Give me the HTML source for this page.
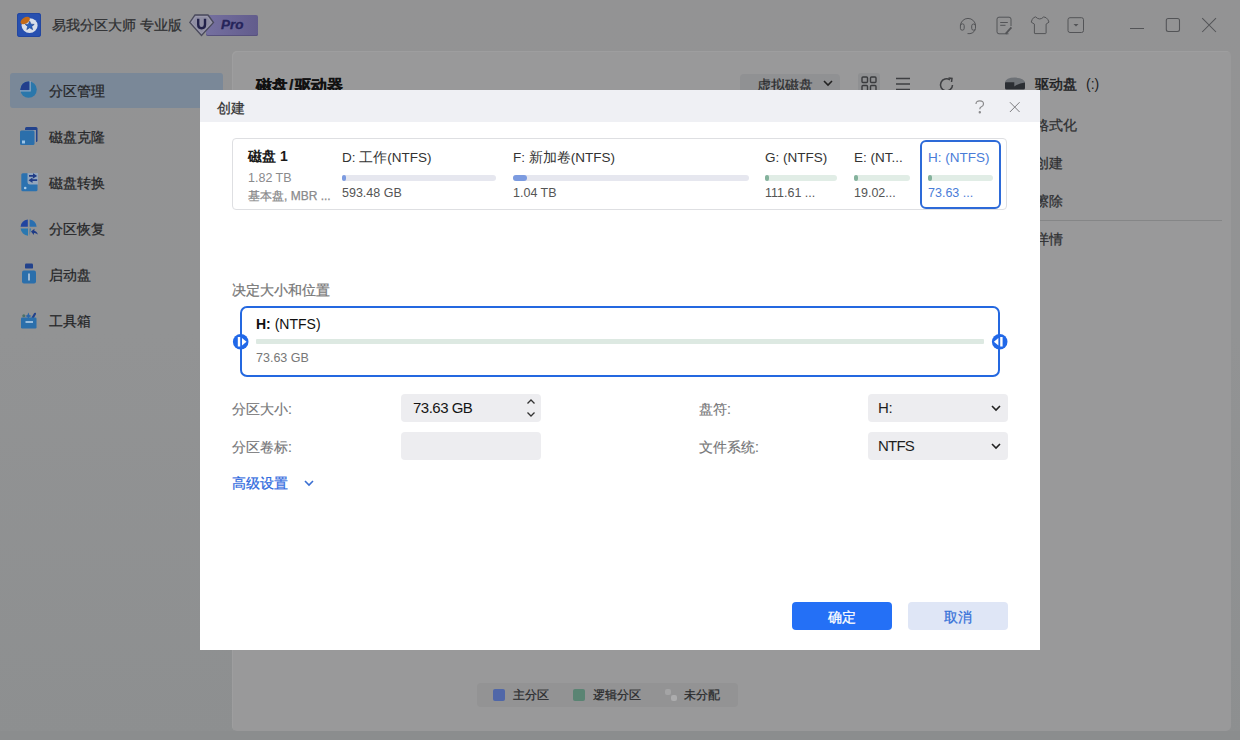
<!DOCTYPE html>
<html><head><meta charset="utf-8">
<style>
*{box-sizing:border-box;margin:0;padding:0}
html,body{width:1240px;height:740px;overflow:hidden}
body{position:relative;background:linear-gradient(180deg,#939394 0%,#929394 45%,#8d8f90 100%);font-family:"Liberation Sans",sans-serif;color:#2b2c2e}
.abs{position:absolute}
.t{position:absolute;white-space:nowrap;line-height:1}
svg{position:absolute;overflow:visible}
.t,.navt,.rm,.lbl{-webkit-text-stroke:0.25px currentColor}
.nl{-webkit-text-stroke:0 !important}
#panel{position:absolute;left:232px;top:51px;width:999px;height:680px;background:#99999a;border-radius:5px;box-shadow:inset 1px 1px 0 #9e9e9f}
#bottomstrip{position:absolute;left:0;top:731px;width:1240px;height:9px;background:#8b8d8e}
.nav{position:absolute;left:10px;width:213px;height:35px;border-radius:3px}
.nav.sel{background:#7a8898}
.navt{position:absolute;left:49px;font-size:14px;color:#252628;line-height:1;white-space:nowrap}
.rm{position:absolute;left:1035px;font-size:14px;color:#2f3032;line-height:1;white-space:nowrap}
#dlg{position:absolute;left:200px;top:90px;width:840px;height:560px;background:#fff}
#dhead{position:absolute;left:0;top:0;width:840px;height:32px;background:#eff0f4}
.card{position:absolute;left:32px;top:48px;width:775px;height:72px;border:1px solid #dedfe2;border-radius:4px}
.pn{position:absolute;font-size:13.5px;color:#333;line-height:1;white-space:nowrap}
.ps{position:absolute;font-size:12.5px;color:#555;margin-top:1px;line-height:1;white-space:nowrap}
.bar{position:absolute;height:6px;border-radius:3px}
.inp{position:absolute;background:#ededf0;border-radius:4px;height:28px}
.lbl{position:absolute;font-size:14px;color:#757577;-webkit-text-stroke:0.15px currentColor !important;margin-top:1px;line-height:1;white-space:nowrap}
</style></head><body>
<!-- ============ APP (dimmed) ============ -->
<!-- logo -->
<div class="abs" style="left:17px;top:13px;width:24px;height:24px;background:#2750b0;border-radius:3px;box-shadow:inset 0 0 0 1px #2246a0"></div>
<svg style="left:17px;top:13px" width="24" height="24" viewBox="0 0 24 24">
  <ellipse cx="12.6" cy="12.6" rx="8" ry="7.4" fill="#d9dfea"/>
  <ellipse cx="8.2" cy="7.6" rx="5.2" ry="3" transform="rotate(-32 8.2 7.6)" fill="#c46a18"/>
  <path d="M12.7 8.2 L14 11.2 L17.2 11.4 L14.7 13.4 L15.6 16.6 L12.7 14.8 L9.8 16.6 L10.7 13.4 L8.2 11.4 L11.4 11.2Z" fill="#2a60bc" stroke="#1f3f8a" stroke-width="0.6"/>
</svg>
<div class="t" style="left:52px;top:18px;font-size:14px;color:#2e2f31">易我分区大师 专业版</div>
<!-- pro badge -->
<div class="abs" style="left:206px;top:15px;width:52px;height:21px;background:linear-gradient(90deg,#7570a0,#625c8c);border-radius:2px;box-shadow:inset 0 -1px 0 #57517d"></div>
<svg style="left:189px;top:14px" width="26" height="23" viewBox="0 0 26 23">
  <path d="M6 1 H19 L24.5 8.5 L12.5 21.5 L0.8 8.5Z" fill="#8e8da2" stroke="#4a4a5c" stroke-width="1.3"/><path d="M6.8 2.6 H18.2 L22.6 8.6 L12.5 19.3 L2.7 8.6Z" fill="none" stroke="#a4a3b6" stroke-width="0.6"/>
  <path d="M9.2 4.8 V10.5 Q9.2 14.2 12.6 14.2 Q16 14.2 16 10.5 V4.8" fill="none" stroke="#22224a" stroke-width="2.4"/>
</svg>
<div class="t nl" style="left:221px;top:18px;font-size:13.5px;font-weight:bold;font-style:italic;color:#25245a;-webkit-text-stroke:0.3px #25245a !important">Pro</div>

<!-- window controls -->
<svg style="left:958px;top:15px" width="130" height="22" viewBox="0 0 130 22" fill="none" stroke="#535457" stroke-width="1">
  <path d="M2.4 11 A7.6 7.6 0 0 1 17.6 11"/><rect x="2.4" y="8.8" width="3.8" height="6.4" rx="1.9"/><rect x="13.7" y="9" width="3.8" height="6.2" rx="1.9"/><path d="M17.4 14.5 A7.6 7.6 0 0 1 9.5 18.6"/>
  <path d="M50.5 18.8 H41 Q39 18.8 39 16.8 V4.2 Q39 2.2 41 2.2 H51 Q53 2.2 53 4.2 V11"/><path d="M42.2 7.5 H49.8 M42.2 10.3 H47.5"/><path d="M53.4 12.4 L47.6 18.8" stroke-width="1.8"/>
  <path d="M77.6 1.9 Q81.7 6 85.7 1.9 L88.1 2.7 Q90.2 4.2 91 7.1 L88.1 9.1 V18 Q88.1 18.6 87.5 18.6 H77 Q76.4 18.6 76.4 18 V9.1 L73.2 7.1 Q74 4.2 75.6 2.7 Z" stroke-linejoin="round"/>
  <rect x="110" y="2.7" width="15.5" height="14.8" rx="2"/><path d="M115.5 9 H120.5 L118 11.5Z" fill="#535457" stroke="none"/>
</svg>
<svg style="left:1128px;top:15px" width="92" height="22" viewBox="0 0 92 22" fill="none" stroke="#535457" stroke-width="1.05">
  <path d="M2 13.5 H16"/>
  <rect x="38.3" y="3.5" width="13.2" height="13" rx="2"/>
  <path d="M74.2 3.2 L88 17 M88 3.2 L74.2 17"/>
</svg>

<!-- sidebar -->
<div class="nav sel" style="top:73px"></div>
<svg style="left:20px;top:81px" width="18" height="18" viewBox="0 0 18 18">
  <defs><clipPath id="pc"><circle cx="8.6" cy="8.6" r="8.2"/></clipPath></defs>
  <circle cx="8.6" cy="8.6" r="8.2" fill="#2a77ab"/>
  <rect x="0" y="0" width="9.6" height="9.2" fill="#233f8c" clip-path="url(#pc)"/>
  <path d="M10.2 0 V9.8 H0" fill="none" stroke="#8ea6c2" stroke-width="1.2"/>
</svg>
<div class="navt" style="top:84px">分区管理</div>
<svg style="left:20px;top:126px" width="18" height="20" viewBox="0 0 18 20">
  <rect x="5" y="1" width="12.5" height="15" rx="1.5" fill="#22428c"/>
  <rect x="4" y="4" width="12" height="12" fill="#8c96a6"/>
  <rect x="0" y="4.5" width="14.5" height="14.5" rx="1.5" fill="#2b6fab"/>
  <rect x="2" y="14.5" width="3" height="3" fill="#9cc4e6"/>
</svg>
<div class="navt" style="top:130px">磁盘克隆</div>
<svg style="left:21px;top:173px" width="18" height="19" viewBox="0 0 18 19">
  <rect x="0.3" y="0.3" width="16.2" height="18" rx="1.5" fill="#2b72b0"/>
  <path d="M6.5 0 H17 V11.5 H9 Q6.5 11.5 6.5 9Z" fill="#93a6bc"/>
  <path d="M8 2 H12 V0.2 L16.2 2.9 L12 5.6 V3.8 H8Z" fill="#1f3b86"/>
  <path d="M16.2 6.3 H11.5 V4.5 L7.5 7.2 L11.5 9.9 V8.1 H16.2Z" fill="#1f3b86"/>
  <circle cx="4.2" cy="15" r="1.3" fill="#a9cbe8"/>
</svg>
<div class="navt" style="top:176px">磁盘转换</div>
<svg style="left:20px;top:219px" width="19" height="19" viewBox="0 0 19 19">
  <path d="M7.8 0.6 A8.2 8.2 0 0 0 0.6 7.8 H7.8Z" fill="#2144a0"/>
  <path d="M9.6 0.6 A8.2 8.2 0 0 1 16.6 7.8 H9.6Z" fill="#2a6fb0"/>
  <path d="M0.6 9.5 A8.2 8.2 0 0 0 8 16.8 L8 9.5Z M9.6 9.5 H11 L9.6 16.8Z" fill="#2a78b0"/>
  <path d="M11 12.5 L14.5 9.8 L14.3 11.8 Q17 12.2 17.8 15.6 Q16 13.8 14 14 L13.8 16Z" fill="#1f3b86"/>
</svg>
<div class="navt" style="top:222px">分区恢复</div>
<svg style="left:22px;top:263px" width="15" height="22" viewBox="0 0 15 22">
  <rect x="3" y="0.6" width="8" height="5" rx="1.2" fill="#22428c"/>
  <rect x="0" y="7.5" width="14" height="13" rx="2" fill="#2b6fab"/>
  <rect x="6" y="10.5" width="2" height="7" fill="#9cbad6"/>
</svg>
<div class="navt" style="top:268px">启动盘</div>
<svg style="left:20px;top:309px" width="18" height="20" viewBox="0 0 18 20">
  <circle cx="3.8" cy="6.8" r="1.5" fill="#4c7068"/>
  <path d="M8.4 3.5 L9.4 5.9 L11.6 6.9 L9.4 7.9 L8.4 10.3 L7.4 7.9 L5.2 6.9 L7.4 5.9Z" fill="#2b66aa"/>
  <path d="M12.8 8.6 L15 4.8" stroke="#22428c" stroke-width="2.2" stroke-linecap="round"/>
  <rect x="1" y="8.5" width="15.5" height="11" rx="1.2" fill="#2b6fab"/>
  <rect x="5.5" y="12" width="7.5" height="2" fill="#98bcdc"/>
</svg>
<div class="navt" style="top:314px">工具箱</div>

<!-- content panel -->
<div id="panel"></div>
<div id="bottomstrip"></div>
<div class="t" style="left:256px;top:78px;font-size:16px;font-weight:bold;color:#111">磁盘<span style="margin:0 2px 0 1px">/</span>驱动器</div>
<div class="abs" style="left:740px;top:74px;width:100px;height:24px;background:#909193;border-radius:4px"></div>
<div class="t" style="left:757px;top:78px;font-size:14px;color:#2c2d2f">虚拟磁盘</div>
<svg style="left:823px;top:80px" width="10" height="7" viewBox="0 0 10 7"><path d="M1 1 L5 5 L9 1" fill="none" stroke="#222" stroke-width="1.6"/></svg>
<div class="abs" style="left:858px;top:73px;width:22px;height:24px;background:#8f9092;border-radius:3px"></div>
<svg style="left:861px;top:76px" width="16" height="16" viewBox="0 0 16 16" fill="none" stroke="#3a3b3e" stroke-width="1.4">
  <rect x="1" y="1" width="5.5" height="5.5" rx="1"/><rect x="9.5" y="1" width="5.5" height="5.5" rx="1"/><rect x="1" y="9.5" width="5.5" height="5.5" rx="1"/><rect x="9.5" y="9.5" width="5.5" height="5.5" rx="1"/>
</svg>
<svg style="left:896px;top:77px" width="15" height="15" viewBox="0 0 15 15" fill="none" stroke="#3e3f42" stroke-width="1.4"><path d="M0 1.5 H14 M0 7 H14 M0 12.5 H14"/></svg>
<svg style="left:939px;top:77px" width="16" height="16" viewBox="0 0 16 16" fill="none" stroke="#3e3f42" stroke-width="1.5"><path d="M13.5 8 A6 6 0 1 1 11 3"/><path d="M9.5 1 L13 1.5 L12.5 5"/></svg>

<!-- right panel -->
<svg style="left:1005px;top:77px" width="20" height="13" viewBox="0 0 20 13">
  <rect x="0" y="4.5" width="20" height="8" rx="1.5" fill="#2b2e33"/>
  <path d="M0 5.3 Q0.8 0.8 10 0.6 Q19.2 0.8 20 5.6 Q14 6.2 9.3 9.4 V5.3Z" fill="#6d7176"/>
</svg>
<div class="rm" style="top:77px;color:#1c1d1f;-webkit-text-stroke:0.45px #1c1d1f">驱动盘<span style="margin-left:9px;-webkit-text-stroke:0">(:)</span></div>
<div class="rm" style="top:118px">格式化</div>
<div class="rm" style="top:156px">创建</div>
<div class="rm" style="top:194px">擦除</div>
<div class="abs" style="left:1000px;top:220px;width:222px;height:1px;background:#858687"></div>
<div class="rm" style="top:232px">详情</div>

<!-- legend -->
<div class="abs" style="left:477px;top:683px;width:261px;height:24px;background:#939394;border-radius:4px"></div>
<div class="abs" style="left:493px;top:689px;width:12px;height:12px;background:#5067a8;border-radius:2px"></div>
<div class="t" style="left:513px;top:689px;font-size:12px;color:#2a2b2d">主分区</div>
<div class="abs" style="left:573px;top:689px;width:12px;height:12px;background:#5a8473;border-radius:2px"></div>
<div class="t" style="left:593px;top:689px;font-size:12px;color:#2a2b2d">逻辑分区</div>
<div class="abs" style="left:665px;top:689px;width:6px;height:6px;background:#a4a4a5;border-radius:2px"></div>
<div class="abs" style="left:671px;top:695px;width:6px;height:6px;background:#acacad;border-radius:2px"></div>
<div class="t" style="left:684px;top:689px;font-size:12px;color:#2a2b2d">未分配</div>

<!-- ============ DIALOG ============ -->
<div id="dlg">
  <div id="dhead"></div>
  <div class="t" style="left:17px;top:11px;font-size:14px;color:#333">创建</div>
  <svg style="left:775px;top:10px" width="10" height="14" viewBox="0 0 10 14" fill="none" stroke="#8a8a8c" stroke-width="1.2"><path d="M1 4 Q1 0.8 4.8 0.8 Q8.5 0.8 8.5 4 Q8.5 6 6 7 Q4.8 7.6 4.8 9.3"/><circle cx="4.8" cy="12.3" r="0.6" fill="#8a8a8c"/></svg>
  <svg style="left:809px;top:11px" width="12" height="12" viewBox="0 0 12 12" fill="none" stroke="#7c7c7f" stroke-width="1"><path d="M0.9 1.2 L10.6 11 M10.6 1.2 L0.9 11"/></svg>

  <!-- disk card -->
  <div class="card"></div>
  <div class="t nl" style="left:48px;top:59px;font-size:14px;font-weight:bold;color:#1a1a1a">磁盘 1</div>
  <div class="t nl" style="left:48px;top:82px;font-size:12.5px;color:#8a8a8c">1.82 TB</div>
  <div class="t" style="left:48px;top:100px;font-size:12px;color:#8a8a8c">基本盘, MBR ...</div>

  <div class="pn" style="left:142px;top:61px">D: 工作(NTFS)</div>
  <div class="bar" style="left:142px;top:85px;width:154px;background:#e6e7ef"></div>
  <div class="bar" style="left:142px;top:85px;width:4px;background:#7c9be0"></div>
  <div class="ps" style="left:142px;top:96px">593.48 GB</div>

  <div class="pn" style="left:313px;top:61px">F: 新加卷(NTFS)</div>
  <div class="bar" style="left:313px;top:85px;width:236px;background:#e6e7ef"></div>
  <div class="bar" style="left:313px;top:85px;width:14px;background:#7c9be0"></div>
  <div class="ps" style="left:313px;top:96px">1.04 TB</div>

  <div class="pn" style="left:565px;top:61px">G: (NTFS)</div>
  <div class="bar" style="left:565px;top:85px;width:72px;background:#e1ede6"></div>
  <div class="bar" style="left:565px;top:85px;width:4px;background:#84b29c"></div>
  <div class="ps" style="left:565px;top:96px">111.61 ...</div>

  <div class="pn" style="left:654px;top:61px">E: (NT...</div>
  <div class="bar" style="left:654px;top:85px;width:56px;background:#e1ede6"></div>
  <div class="bar" style="left:654px;top:85px;width:4px;background:#84b29c"></div>
  <div class="ps" style="left:654px;top:96px">19.02...</div>

  <div class="abs" style="left:720px;top:50px;width:81px;height:69px;border:2px solid #2d6ad8;border-radius:6px"></div>
  <div class="pn" style="left:728px;top:61px;color:#4a7cd8">H: (NTFS)</div>
  <div class="bar" style="left:728px;top:85px;width:65px;background:#e1ede6"></div>
  <div class="bar" style="left:728px;top:85px;width:4px;background:#84b29c"></div>
  <div class="ps" style="left:728px;top:96px;color:#4a7cd8">73.63 ...</div>

  <!-- size & position -->
  <div class="t" style="left:32px;top:193px;font-size:14px;color:#777">决定大小和位置</div>
  <div class="abs" style="left:40px;top:216px;width:760px;height:71px;border:2px solid #2468e0;border-radius:7px"></div>
  <div class="t nl" style="left:56px;top:227px;font-size:14px;color:#111"><b>H:</b> (NTFS)</div>
  <div class="abs" style="left:56px;top:249px;width:728px;height:5px;background:#dde9e2;border-radius:1px"></div>
  <div class="t nl" style="left:56px;top:262px;font-size:12.5px;color:#777">73.63 GB</div>
  <svg style="left:32px;top:243px" width="18" height="18" viewBox="0 0 18 18">
    <circle cx="8.7" cy="8.7" r="7.8" fill="#2168e8"/>
    <rect x="5.8" y="4" width="2.4" height="9.5" fill="#fff"/>
    <path d="M10 5 L14.5 8.7 L10 12.4Z" fill="#fff"/>
  </svg>
  <svg style="left:791px;top:243px" width="18" height="18" viewBox="0 0 18 18">
    <circle cx="8.7" cy="8.7" r="7.8" fill="#2168e8"/>
    <rect x="9.2" y="4" width="2.4" height="9.5" fill="#fff"/>
    <path d="M7.4 5 L2.9 8.7 L7.4 12.4Z" fill="#fff"/>
  </svg>

  <!-- form -->
  <div class="lbl" style="left:32px;top:311px">分区大小:</div>
  <div class="inp" style="left:201px;top:304px;width:140px"></div>
  <div class="t nl" style="left:213px;top:310px;font-size:15px;letter-spacing:-0.5px;color:#151515">73.63 GB</div>
  <svg style="left:326px;top:308px" width="10" height="20" viewBox="0 0 10 20" fill="none" stroke="#333" stroke-width="1.3"><path d="M1.5 5.5 L5 2 L8.5 5.5 M1.5 14.5 L5 18 L8.5 14.5"/></svg>
  <div class="lbl" style="left:32px;top:349px">分区卷标:</div>
  <div class="inp" style="left:201px;top:342px;width:140px"></div>
  <div class="t" style="left:32px;top:386px;font-size:14px;color:#2f6ade">高级设置</div>
  <svg style="left:104px;top:390px" width="10" height="7" viewBox="0 0 10 7"><path d="M1 1 L5 5 L9 1" fill="none" stroke="#3a6fd2" stroke-width="1.6"/></svg>

  <div class="lbl" style="left:499px;top:311px">盘符:</div>
  <div class="inp" style="left:668px;top:304px;width:140px"></div>
  <div class="t nl" style="left:678px;top:310px;font-size:15px;letter-spacing:-0.3px;color:#1e1e1e">H:</div>
  <svg style="left:791px;top:315px" width="10" height="7" viewBox="0 0 10 7"><path d="M1 1 L5 5 L9 1" fill="none" stroke="#222" stroke-width="1.6"/></svg>
  <div class="lbl" style="left:499px;top:349px">文件系统:</div>
  <div class="inp" style="left:668px;top:342px;width:140px"></div>
  <div class="t nl" style="left:678px;top:348px;font-size:15px;letter-spacing:-0.8px;color:#1e1e1e">NTFS</div>
  <svg style="left:791px;top:353px" width="10" height="7" viewBox="0 0 10 7"><path d="M1 1 L5 5 L9 1" fill="none" stroke="#222" stroke-width="1.6"/></svg>

  <!-- buttons -->
  <div class="abs" style="left:592px;top:512px;width:100px;height:28px;background:#2470f6;border-radius:4px"></div>
  <div class="t" style="left:628px;top:520px;font-size:14px;color:#fff">确定</div>
  <div class="abs" style="left:708px;top:512px;width:100px;height:28px;background:#dfe6f6;border-radius:4px"></div>
  <div class="t" style="left:744px;top:520px;font-size:14px;color:#3470d8">取消</div>
</div>
</body></html>
